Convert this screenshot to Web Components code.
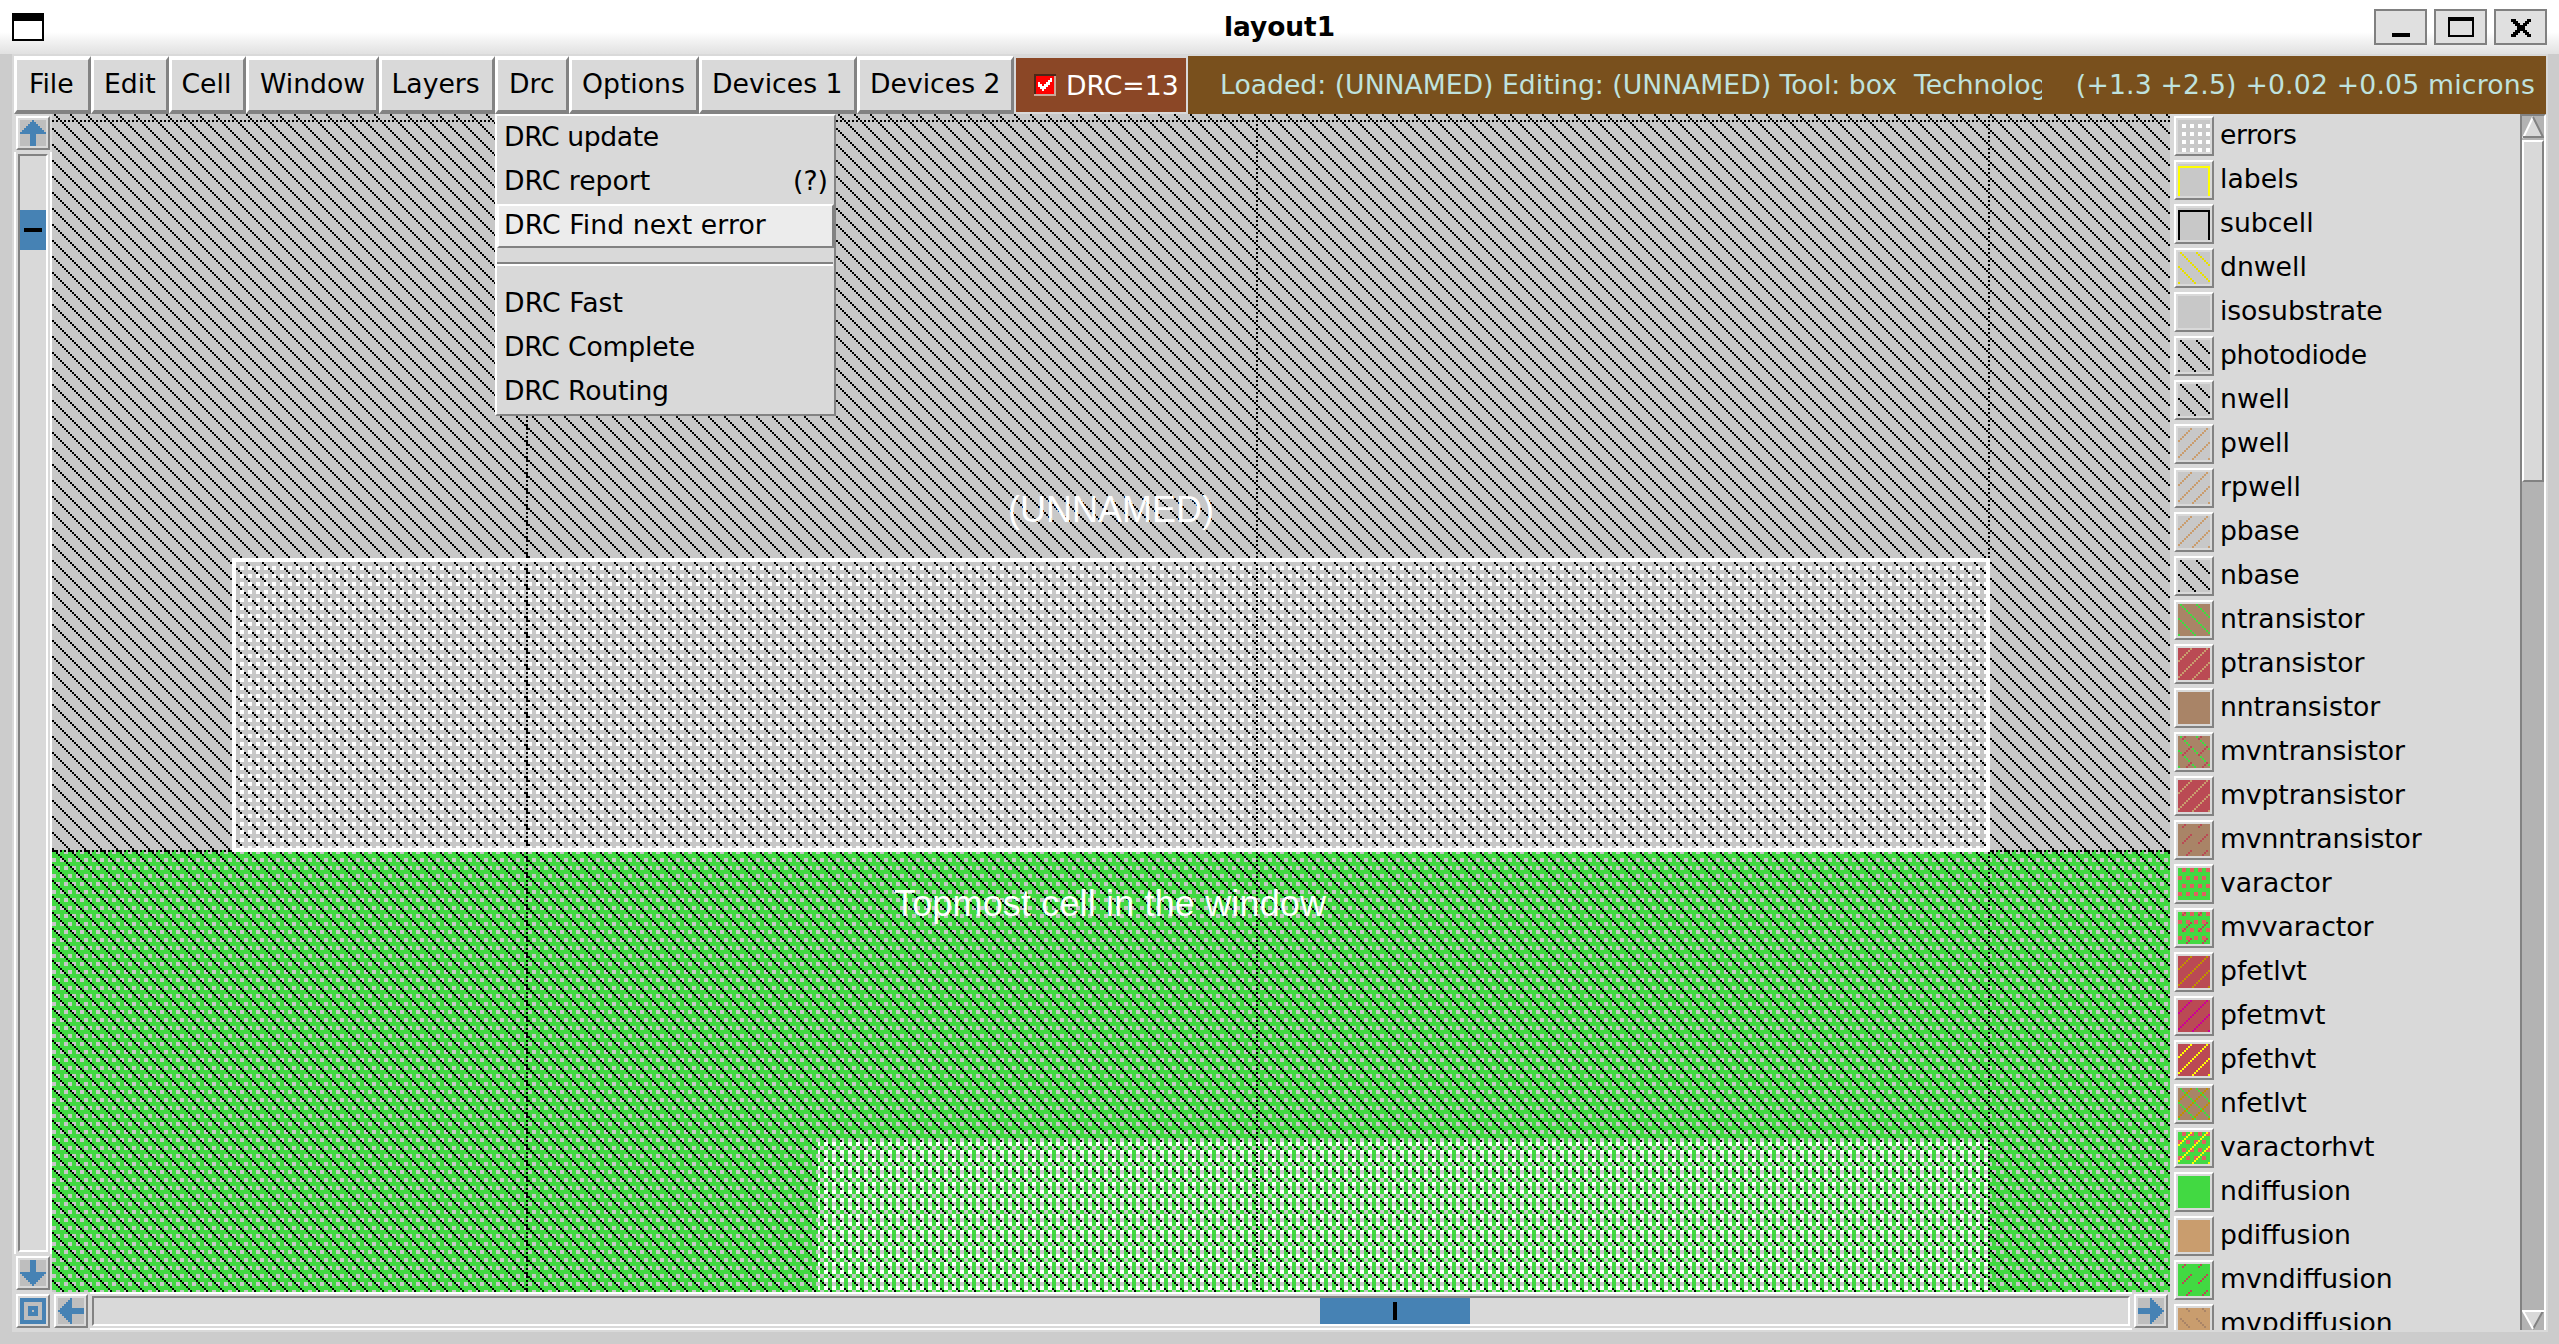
<!DOCTYPE html>
<html lang="en"><head><meta charset="utf-8"><title>layout1</title>
<style>html,body{margin:0;height:100%;overflow:hidden;background:#ccc}body{font:26.67px "DejaVu Sans",sans-serif;color:#000}</style></head>
<body><magic-window></magic-window>
<script>
const def=(name,fn)=>customElements.define(name,class extends HTMLElement{
  connectedCallback(){if(!this.shadowRoot)this.attachShadow({mode:'open'}).innerHTML=fn(this);}
});
const cells=(list,s=2,w=1)=>list.map(([x,y])=>`<rect x="${x*s}" y="${y*s}" width="${w*s}" height="${w*s}"/>`).join('');
const range=n=>[...Array(n).keys()];
const pat=(id,w,h,x,y,color,body)=>`<pattern id="${id}" patternUnits="userSpaceOnUse" x="${x}" y="${y}" width="${w}" height="${h}"><g fill="${color}">${body}</g></pattern>`;

def('title-button',()=>`<style>:host{box-sizing:border-box;display:block;width:53px;height:36px;border:2px solid #808080;background:#e0e0e0}::slotted(svg){display:block;width:49px;height:32px}</style><slot></slot>`);
def('title-bar',()=>`<style>
:host{display:grid;grid-template-columns:1fr auto 1fr;align-items:center;height:54px;box-sizing:border-box;padding:0 12px;background:linear-gradient(#fff 32px,#f6f6f6 38px,#e1e1e1 54px)}
b{font-size:26.4px;line-height:52px}svg{display:block}
.ctl{display:flex;gap:7px;justify-content:flex-end}</style>
<svg width="32" height="28"><rect x="1" y="1" width="30" height="26" fill="#fff" stroke="#000" stroke-width="2"/><path d="M0 0h32v8H0z"/></svg>
<b>${'layout1'}</b>
<div class="ctl"><title-button><svg viewBox="0 0 49 32"><path d="M16 22h18v4H16z"/></svg></title-button>
<title-button><svg viewBox="0 0 49 32"><path d="M12 6h26v20H12zM14 10v14h22V10z" fill-rule="evenodd"/></svg></title-button>
<title-button><svg viewBox="0 0 49 32" shape-rendering="crispEdges"><path d="M15 8h5v2h2v2h2v2h3v-2h2v-2h2V8h4v3h-2v2h-2v2h-2v4h2v2h2v2h2v3h-4v-2h-2v-2h-2v-2h-3v2h-2v2h-2v2h-5v-3h2v-2h2v-2h2v-4h-2v-2h-2v-2h-2z"/></svg></title-button></div>`);

def('menu-button',e=>`<style>:host{box-sizing:border-box;display:block;flex:none;width:${e.getAttribute('w')}px;height:58px;border:solid;border-width:4px 3px 4px 3px;border-color:#fff #828282 #828282 #fff;background:#d9d9d9;padding-left:${e.getAttribute('pad')||10}px;line-height:47px;white-space:nowrap}</style><slot></slot>`);
def('drc-check',()=>`<style>:host{display:flex;align-items:center;box-sizing:border-box;width:170px;height:54px;margin:2px;background:#8b4726;color:#fff;padding-left:18px;gap:10px;line-height:51px;white-space:nowrap}svg{flex:none}</style>
<svg width="22" height="22" shape-rendering="crispEdges"><path fill="#f00" d="M0 0h22v22H0z"/><path fill="#4a2818" d="M0 0h22v2H2v18H0z"/><path fill="#c9a898" d="M0 20h20V2h2v20H0z"/><path fill="#fff" d="M4 8h2v2h2v2h2v-2h2V8h2V6h2V4h2v4h-2v3h-2v2h-2v2h-2v2H8v-2H6v-2H4z"/></svg><slot></slot>`);
def('status-line',()=>`<style>:host{flex:1;min-width:0;display:flex;height:58px;box-sizing:border-box;background:#79501d;color:#bfe2de;padding:0 11px 0 32px;line-height:57px;white-space:pre}.l{width:822px;overflow:hidden}.r{flex:1;text-align:right;letter-spacing:.2px}</style><div class="l"><slot name="loaded"></slot></div><div class="r"><slot name="coords"></slot></div>`);
def('menu-bar',()=>`<style>:host{display:flex;height:58px;padding-left:2px}</style>${[['File',77,12],['Edit',77.5],['Cell',77.5],['Window',132.5,11],['Layers',116.5],['Drc',74,11],['Options',130],['Devices 1',158],['Devices 2',157]].map(([t,w,p])=>`<menu-button w="${w}" pad="${p||10}">${t}</menu-button>`).join('')}<drc-check>DRC=13</drc-check><status-line><span slot="loaded">Loaded: (UNNAMED) Editing: (UNNAMED) Tool: box  Technolog</span><span slot="coords">(+1.3 +2.5) +0.02 +0.05 microns</span></status-line>`);

def('menu-item',e=>`<style>:host{display:flex;justify-content:space-between;box-sizing:border-box;height:44px;line-height:37px;padding:0 4px 0 5px;border:2px solid transparent;white-space:nowrap;letter-spacing:${e.getAttribute('track')||0}px}:host([active]){background:#ececec;border-color:#fff #828282 #828282 #fff}</style><span><slot></slot></span><slot name="key"></slot>`);
def('drop-menu',()=>`<style>:host{display:block;position:absolute;left:495px;top:114px;width:341px;height:302px;box-sizing:border-box;border:2px solid;border-color:#fff #828282 #828282 #fff;background:#d9d9d9}hr{margin:14px 1px 16px 0;border:0;height:2px;background:#828282;border-bottom:2px solid #fff}</style>
<menu-item track="-.4">DRC update</menu-item><menu-item>DRC report<span slot="key">(?)</span></menu-item><menu-item active track=".1">DRC Find next error</menu-item><hr><menu-item track=".1">DRC Fast</menu-item><menu-item track="-.2">DRC Complete</menu-item><menu-item track="-.2">DRC Routing</menu-item>`);

def('arrow-button',e=>{const d=e.getAttribute('dir');
const shape=d==='box'?'<path fill-rule="evenodd" d="M0 0h26v26H0zM4 4v18h18V4zM8 8h10v10H8zM12 12v2h2v-2z"/>':`<path transform="rotate(${{up:0,right:90,down:180,left:270}[d]} 13 13)" d="M10 26V14H0v-2h2v-2h2V8h2V6h2V4h2V2h2V0h2v2h2v2h2v2h2v2h2v2h2v2h2v2H16v12z"/>`;
return `<style>:host{display:block;box-sizing:border-box;flex:none;width:34px;height:34px;border:2px solid;border-color:#fff #828282 #828282 #fff;padding:2px;background:#d9d9d9}svg{display:block;background:#bebebe}</style><svg width="26" height="26" fill="#4682b4" shape-rendering="crispEdges">${shape}</svg>`});
def('scroll-left',()=>`<style>:host{display:flex;flex-direction:column;align-items:center;width:38px;padding:2px 0;margin-left:2px;gap:2px;box-sizing:border-box;height:1178px}
.t{flex:1;width:38px;box-sizing:border-box;border:solid #fff;border-width:0 2px;padding:2px;display:flex}.i{flex:1;border:2px solid;border-color:#828282 #fff #fff #828282}.s{margin-top:54px;height:40px;background:#4682b4;display:grid;place-items:center}.s::after{content:"";width:18px;height:4px;background:#000}</style>
<arrow-button dir="up"></arrow-button><div class="t"><div class="i"><div class="s"></div></div></div><arrow-button dir="down"></arrow-button>`);
def('scroll-bottom',()=>`<style>:host{display:flex;align-items:center;height:38px;padding:0 2px 0 4px;box-sizing:border-box;width:2158px}arrow-button+arrow-button{margin-left:4px}
.t{flex:1;margin:0 2px;height:38px;box-sizing:border-box;border:solid #fff;border-width:2px 0;padding:2px;display:flex}.i{flex:1;border:2px solid;border-color:#828282 #fff #fff #828282}.s{margin-left:1226px;width:150px;height:26px;background:#4682b4;display:grid;place-items:center}.s::after{content:"";height:18px;width:4px;background:#000}</style>
<arrow-button dir="box"></arrow-button><arrow-button dir="left"></arrow-button><div class="t"><div class="i"><div class="s"></div></div></div><arrow-button dir="right"></arrow-button>`);

def('layout-canvas',()=>`<style>:host{display:block;width:2118px;height:1178px}svg{display:block}text{font:36px "Liberation Sans",Arial,sans-serif;fill:#fff}</style>
<svg width="2118" height="1178" viewBox="52 114 2118 1178" shape-rendering="crispEdges"><defs>
${pat('well',16,16,4,0,'#000',cells(range(8).map(i=>[i,i])))}
${pat('hole',8,16,0,0,'#c8c8c8','<path d="M0 2h4v4H0zM4 10h4v4H4z"/>')}
${pat('err',8,8,0,6,'#fff','<path d="M0 0h4v4H0z"/>')}
${pat('dv',2,4,0,0,'#000','<path d="M0 0h2v2H0z"/>')}
${pat('dh',4,2,0,0,'#000','<path d="M0 0h2v2H0z"/>')}</defs>
<path fill="#c8c8c8" d="M52 114h2118v1178H52z"/>
<path fill="#42d942" d="M52 850h2118v442H52z"/><path fill="url(#hole)" d="M52 850h2118v442H52z"/>
<path fill="url(#well)" d="M52 114h2118v1178H52z"/>
<path fill="url(#err)" d="M236 562h1750v286H236zM818 1140h1170v152H818z"/>
<path fill="url(#dv)" d="M526 114h2v1178h-2zM1256 114h2v1178h-2zM1988 114h2v1178h-2z"/>
<path fill="url(#dh)" d="M52 120h2118v2H52zM52 850h2118v2H52z"/>
<path fill="none" stroke="#fff" stroke-width="4" d="M234 560h1754v290H234z"/>
<text x="1008" y="522" textLength="206">(UNNAMED)</text><text x="894" y="916" textLength="432">Topmost cell in the window</text></svg>`);

const C={bg:'#c8c8c8',brown:'#a98467',red:'#ba4a54',green:'#42d942',tan:'#c99d6e',gold:'#c09000',mag:'#cc0099',yel:'#ffff00',rose:'#e06060',k:'#000'};
const P={
 back:()=>[16,16,cells(range(8).map(i=>[(i+1)%8,i]))],
 slash:()=>[16,16,cells(range(8).map(i=>[(14-i)%8,i]))],
 dash:()=>[16,16,cells([[6,5],[5,6],[4,7],[3,0],[2,1]])],
 bdash:()=>[16,16,cells([[1,5],[2,6],[3,7],[4,0],[5,1]])],
 dots:()=>[8,16,'<path d="M4 0h4v4H4zM0 8h4v4H0z"/>'],
 grid:()=>[8,8,'<path d="M4 4h4v4H4z"/>']};
def('layer-swatch',e=>{const [base,...ls]=e.getAttribute('fill').split(' ');
const defs=[],draw=[];ls.forEach((l,i)=>{const [k,c]=l.split(':');const col=C[c]||c;
 if(k==='frame')draw.push(`<path fill="${col}" d="M0 2h32v30h-2V4H2v28H0z"/>`);
 else{const [w,h,b]=P[k]();defs.push(pat('p'+i,w,h,0,0,col,b));draw.push(`<path fill="url(#p${i})" d="M0 0h32v32H0z"/>`);}});
return `<style>:host{display:block;flex:none;box-sizing:border-box;width:40px;height:40px;border:2px solid;border-color:#fff #828282 #828282 #fff;padding:2px}svg{display:block}</style><svg width="32" height="32" shape-rendering="crispEdges"><defs>${defs.join('')}</defs><path fill="${C[base]}" d="M0 0h32v32H0z"/>${draw.join('')}</svg>`});
def('layer-row',e=>`<style>:host{display:flex;flex:none;height:44px;padding:2px 0 0 4px;box-sizing:border-box;gap:6px}span{line-height:38px;letter-spacing:${e.getAttribute('track')||0}px}</style><layer-swatch fill="${e.getAttribute('fill')}"></layer-swatch><span><slot></slot></span>`);
const layers=[['errors','bg grid:#fff',-.3],['labels','bg frame:yel'],['subcell','bg frame:k'],['dnwell','bg back:#e8e000'],['isosubstrate','bg',-.1],['photodiode','bg back:k',-.4],['nwell','bg back:k'],['pwell','bg slash:tan'],['rpwell','bg slash:tan'],['pbase','bg slash:tan',-.2],['nbase','bg back:k',-.2],['ntransistor','brown back:green'],['ptransistor','red slash:tan'],['nntransistor','brown',-.1],['mvntransistor','brown back:green dash:red',-.1],['mvptransistor','red slash:tan',-.1],['mvnntransistor','brown dash:red',-.1],['varactor','green dots:rose'],['mvvaractor','green dots:rose dash:red'],['pfetlvt','red slash:gold'],['pfetmvt','red slash:mag'],['pfethvt','red slash:yel'],['nfetlvt','brown slash:gold back:green'],['varactorhvt','green dots:rose slash:yel'],['ndiffusion','green'],['pdiffusion','tan'],['mvndiffusion','green dash:red'],['mvpdiffusion','tan bdash:brown']];
def('layer-list',()=>`<style>:host{display:flex;flex-direction:column;flex:1;overflow:hidden;height:1216px}</style>${layers.map(([n,f,t])=>`<layer-row fill="${f}" track="${t||0}">${n}</layer-row>`).join('')}`);
def('side-scroll',()=>`<style>:host{display:flex;flex-direction:column;box-sizing:border-box;width:26px;height:1216px;border:solid;border-width:2px 2px 0 2px;border-color:#828282 #fff #fff #828282;background:#b3b3b3}svg{display:block;flex:none}.t{box-sizing:border-box;height:342px;border:2px solid;border-color:#fff #828282 #828282 #fff;background:#d9d9d9}.g{flex:1}</style>
<svg width="22" height="24"><path fill="#d9d9d9" d="M11 2 21 21H1z"/><path d="M11 1 1 22" stroke="#fff" stroke-width="2"/><path d="M11 1l10 20H1" fill="none" stroke="#828282" stroke-width="2"/></svg><div class="t"></div><div class="g"></div>
<svg width="22" height="20"><path fill="#d9d9d9" d="M1 1h20L11 19z"/><path d="M21 1 11 19" stroke="#828282" stroke-width="2"/><path d="M22 1H1l10 18" fill="none" stroke="#fff" stroke-width="2"/></svg>`);

def('magic-window',()=>`<style>:host{display:block;position:relative;width:2559px;height:1344px;background:#ccc;overflow:hidden}
main{margin:0 11px 0 12px;width:2536px;box-sizing:border-box;height:1278px;background:#d9d9d9;padding:2px 2px 2px 0}
.body{display:flex}.left{width:2158px;flex:none}.row{display:flex}</style>
<title-bar></title-bar><main><menu-bar></menu-bar><div class="body"><div class="left"><div class="row"><scroll-left></scroll-left><layout-canvas></layout-canvas></div><scroll-bottom></scroll-bottom></div><layer-list></layer-list><side-scroll></side-scroll></div></main><drop-menu></drop-menu>`);
</script></body></html>
